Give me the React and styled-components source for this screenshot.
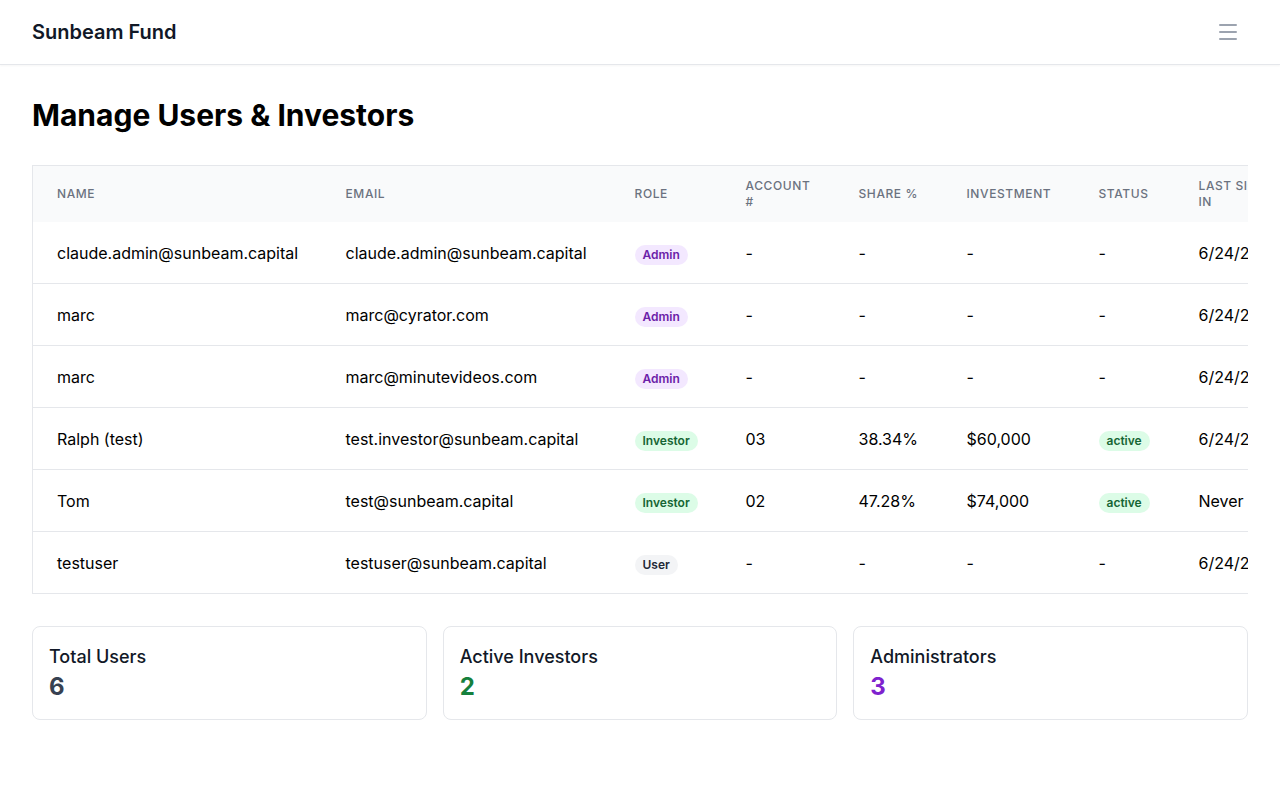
import React from "react";
import styled, { createGlobalStyle } from "styled-components";
import { Menu } from "lucide-react";

const GlobalStyle = createGlobalStyle`
  * { box-sizing: border-box; }
  body {
    margin: 0;
    font-family: Inter, "Noto Sans", "Liberation Sans", sans-serif;
    background: #ffffff;
    color: #000000;
  }
`;

const Header = styled.header`
  height: 65px;
  display: flex;
  align-items: center;
  justify-content: space-between;
  padding: 0 32px;
  border-bottom: 1px solid #e5e7eb;
  box-shadow: 0 1px 2px rgba(0, 0, 0, 0.04);
`;

const Brand = styled.div`
  font-size: 20px;
  line-height: 28px;
  font-weight: 600;
  color: #111827;
`;

const MenuButton = styled.button`
  border: none;
  background: none;
  padding: 8px;
  display: flex;
  color: #9ca3af;
`;

const Main = styled.main`
  padding: 32px;
`;

const Title = styled.h1`
  margin: 0 0 32px;
  font-size: 30px;
  line-height: 36px;
  font-weight: 700;
  color: #000000;
`;

const TableWrap = styled.div`
  overflow: hidden;
`;

const Table = styled.table`
  border-collapse: collapse;
  table-layout: fixed;
  width: 1412px;
  border: 1px solid #e5e7eb;
  border-right: none;
`;

const Th = styled.th`
  background: #f9fafb;
  padding: 12px 24px;
  text-align: left;
  font-size: 12px;
  line-height: 16px;
  font-weight: 500;
  color: #6b7280;
  text-transform: uppercase;
  letter-spacing: 0.05em;
`;

const Td = styled.td`
  padding: 19px 24px 18px;
  font-size: 16px;
  line-height: 24px;
  color: #000000;
  white-space: nowrap;
  border-bottom: 1px solid #e5e7eb;
`;

const badgeColors = {
  Admin: ["#f3e8ff", "#6b21a8"],
  Investor: ["#dcfce7", "#166534"],
  User: ["#f3f4f6", "#1f2937"],
  active: ["#dcfce7", "#166534"],
};

const Badge = styled.span`
  display: inline-block;
  padding: 2px 8px;
  border-radius: 9999px;
  font-size: 12px;
  line-height: 16px;
  font-weight: 600;
  background: ${(p) => badgeColors[p.kind][0]};
  color: ${(p) => badgeColors[p.kind][1]};
  vertical-align: middle;
`;

const Stats = styled.div`
  display: grid;
  grid-template-columns: repeat(3, 1fr);
  gap: 16px;
  margin-top: 32px;
`;

const Card = styled.div`
  border: 1px solid #e5e7eb;
  border-radius: 8px;
  padding: 16px;
`;

const CardLabel = styled.div`
  font-size: 18px;
  line-height: 28px;
  font-weight: 500;
  color: #111827;
`;

const CardValue = styled.div`
  font-size: 24px;
  line-height: 32px;
  font-weight: 700;
  color: ${(p) => p.color};
`;

const columns = [
  ["Name", 289],
  ["Email", 289],
  ["Role", 111],
  ["Account #", 113],
  ["Share %", 108],
  ["Investment", 132],
  ["Status", 100],
  ["Last Sign In", 120],
  ["Actions", 150],
];

const users = [
  { name: "claude.admin@sunbeam.capital", email: "claude.admin@sunbeam.capital", role: "Admin", account: "-", share: "-", investment: "-", status: "-", last: "6/24/2025" },
  { name: "marc", email: "marc@cyrator.com", role: "Admin", account: "-", share: "-", investment: "-", status: "-", last: "6/24/2025" },
  { name: "marc", email: "marc@minutevideos.com", role: "Admin", account: "-", share: "-", investment: "-", status: "-", last: "6/24/2025" },
  { name: "Ralph (test)", email: "test.investor@sunbeam.capital", role: "Investor", account: "03", share: "38.34%", investment: "$60,000", status: "active", last: "6/24/2025" },
  { name: "Tom", email: "test@sunbeam.capital", role: "Investor", account: "02", share: "47.28%", investment: "$74,000", status: "active", last: "Never" },
  { name: "testuser", email: "testuser@sunbeam.capital", role: "User", account: "-", share: "-", investment: "-", status: "-", last: "6/24/2025" },
];

const App = () => {
  return (
    <>
      <GlobalStyle />
      <Header>
        <Brand>Sunbeam Fund</Brand>
        <MenuButton>
          <Menu size={24} strokeWidth={2} />
        </MenuButton>
      </Header>
      <Main>
        <Title>Manage Users &amp; Investors</Title>
        <TableWrap>
          <Table>
            <colgroup>
              {columns.map(([label, w]) => (
                <col key={label} style={{ width: w }} />
              ))}
            </colgroup>
            <thead>
              <tr>
                {columns.map(([label]) => (
                  <Th key={label}>{label}</Th>
                ))}
              </tr>
            </thead>
            <tbody>
              {users.map((u, i) => (
                <tr key={i}>
                  <Td>{u.name}</Td>
                  <Td>{u.email}</Td>
                  <Td>
                    <Badge kind={u.role}>{u.role}</Badge>
                  </Td>
                  <Td>{u.account}</Td>
                  <Td>{u.share}</Td>
                  <Td>{u.investment}</Td>
                  <Td>
                    {u.status === "active" ? (
                      <Badge kind="active">active</Badge>
                    ) : (
                      u.status
                    )}
                  </Td>
                  <Td>{u.last}</Td>
                  <Td>Edit</Td>
                </tr>
              ))}
            </tbody>
          </Table>
        </TableWrap>
        <Stats>
          <Card>
            <CardLabel>Total Users</CardLabel>
            <CardValue color="#374151">6</CardValue>
          </Card>
          <Card>
            <CardLabel>Active Investors</CardLabel>
            <CardValue color="#15803d">2</CardValue>
          </Card>
          <Card>
            <CardLabel>Administrators</CardLabel>
            <CardValue color="#7e22ce">3</CardValue>
          </Card>
        </Stats>
      </Main>
    </>
  );
};

export default App;
